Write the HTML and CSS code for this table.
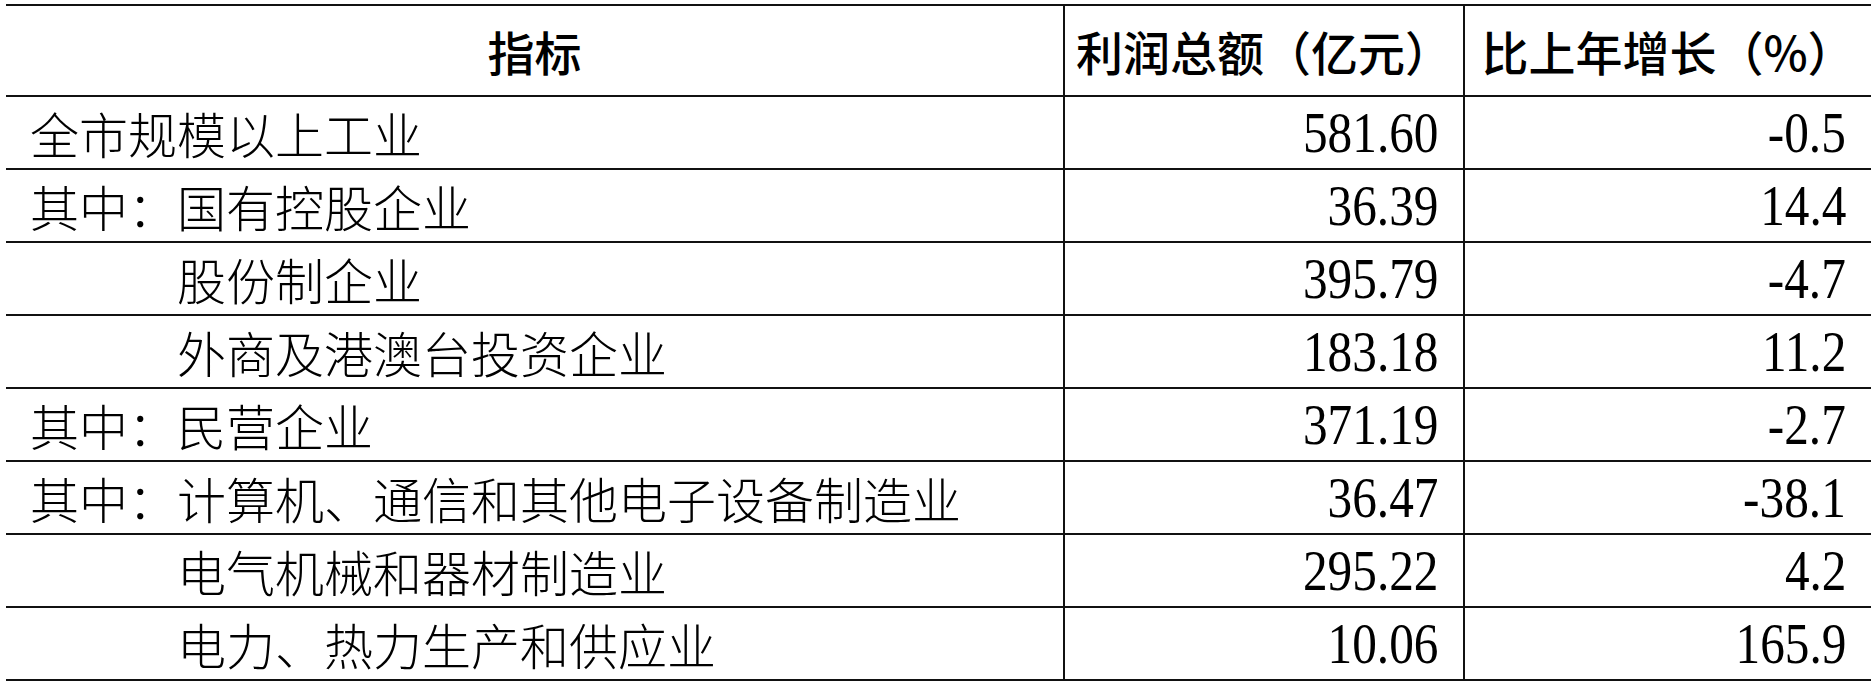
FILE: index.html
```html
<!DOCTYPE html>
<html lang="zh-CN">
<head>
<meta charset="utf-8">
<title>利润总额</title>
<link rel="stylesheet" href="styles.css">
</head>
<body>
<table class="stats">
  <colgroup>
    <col class="c-name">
    <col class="c-val">
    <col class="c-pct">
  </colgroup>
  <thead>
    <tr>
      <th>指标</th>
      <th>利润总额（亿元）</th>
      <th>比上年增长（%）</th>
    </tr>
  </thead>
  <tbody>
    <tr><td class="name">全市规模以上工业</td><td class="num"><span class="n">581.60</span></td><td class="num"><span class="n">-0.5</span></td></tr>
    <tr><td class="name">其中：国有控股企业</td><td class="num"><span class="n">36.39</span></td><td class="num"><span class="n">14.4</span></td></tr>
    <tr><td class="name indent">股份制企业</td><td class="num"><span class="n">395.79</span></td><td class="num"><span class="n">-4.7</span></td></tr>
    <tr><td class="name indent">外商及港澳台投资企业</td><td class="num"><span class="n">183.18</span></td><td class="num"><span class="n">11.2</span></td></tr>
    <tr><td class="name">其中：民营企业</td><td class="num"><span class="n">371.19</span></td><td class="num"><span class="n">-2.7</span></td></tr>
    <tr><td class="name">其中：计算机、通信和其他电子设备制造业</td><td class="num"><span class="n">36.47</span></td><td class="num"><span class="n">-38.1</span></td></tr>
    <tr><td class="name indent">电气机械和器材制造业</td><td class="num"><span class="n">295.22</span></td><td class="num"><span class="n">4.2</span></td></tr>
    <tr><td class="name indent">电力、热力生产和供应业</td><td class="num"><span class="n">10.06</span></td><td class="num"><span class="n">165.9</span></td></tr>
  </tbody>
</table>
</body>
</html>
```
FILE: styles.css
```css
html, body {
  margin: 0;
  padding: 0;
  background: #fff;
}
body {
  padding: 4px 0 0 6px;
  font-family: "Noto Sans CJK SC", sans-serif;
  color: #000;
}
.stats {
  border-collapse: collapse;
  width: 1865px;
  table-layout: fixed;
}
.c-name { width: 1058px; }
.c-val { width: 400px; }
.c-pct { width: 407px; }
.stats th,
.stats td {
  border-top: 2px solid #111;
  border-bottom: 2px solid #111;
  padding: 0;
  white-space: nowrap;
  overflow: hidden;
}
.stats th + th,
.stats td + td {
  border-left: 2px solid #111;
}
.stats thead tr { height: 91px; }
.stats tbody tr { height: 73px; }
.stats th {
  font-size: 47px;
  font-weight: 500;
  text-align: center;
  line-height: 1;
}
.stats td {
  font-size: 49px;
  font-weight: 300;
  line-height: 1;
}
.name {
  padding-left: 24px !important;
  text-align: left;
}
.name.indent {
  padding-left: calc(24px + 3em) !important;
}
.num {
  font-family: "Liberation Serif", serif;
  text-align: right;
  padding-right: 25px !important;
}
.n {
  display: inline-block;
  font-size: 58px;
  font-weight: 400;
  transform: scaleX(0.85);
  transform-origin: right center;
}
```
